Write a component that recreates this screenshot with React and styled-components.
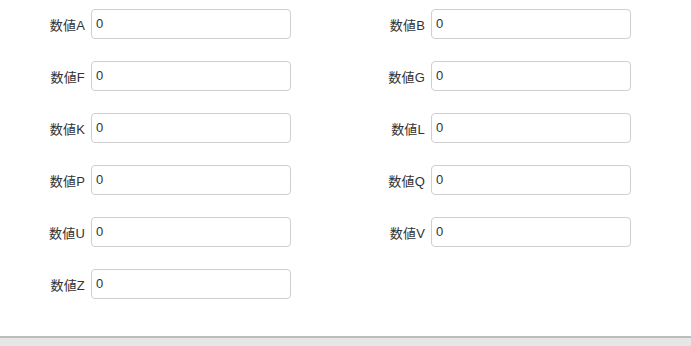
import React from 'react';
import styled, { createGlobalStyle } from 'styled-components';

const GlobalStyle = createGlobalStyle`
  html, body {
    margin: 0;
    padding: 0;
    background: #e6e6e6;
    font-family: "Liberation Sans", "Noto Sans CJK JP", sans-serif;
  }
`;

const Panel = styled.div`
  background: #fff;
  padding: 9px 0 37px;
  border-bottom: 2px solid #bdbdbd;
`;

const Grid = styled.div`
  display: grid;
  grid-template-columns: repeat(2, 340px);
  row-gap: 22px;
`;

const Field = styled.div`
  display: flex;
  align-items: center;
  gap: 6px;
`;

const Label = styled.label`
  width: 85px;
  text-align: right;
  font-size: 13px;
  color: #333;
  padding-top: 1px;
  letter-spacing: 0.2px;
`;

const Input = styled.input`
  box-sizing: border-box;
  width: 200px;
  height: 30px;
  border: 1px solid #cfcfcf;
  border-radius: 4px;
  padding: 0 4px 2px;
  font-size: 13px;
  font-family: "Liberation Sans", sans-serif;
  color: #333;
  outline: none;
`;

const Footer = styled.div`
  height: 8px;
  background: #e6e6e6;
`;

const fields = ['A', 'B', 'F', 'G', 'K', 'L', 'P', 'Q', 'U', 'V', 'Z'];

export default function App() {
  return (
    <>
      <GlobalStyle />
      <Panel>
        <Grid>
          {fields.map((f) => (
            <Field key={f}>
              <Label>数値{f}</Label>
              <Input defaultValue="0" />
            </Field>
          ))}
        </Grid>
      </Panel>
      <Footer />
    </>
  );
}
